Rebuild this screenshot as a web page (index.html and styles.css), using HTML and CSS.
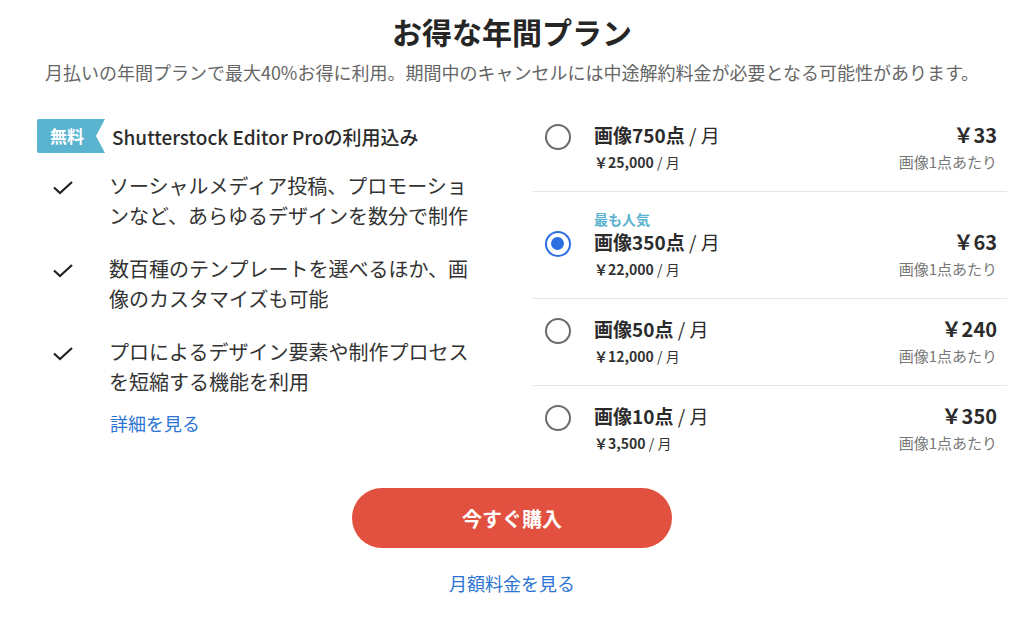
FILE: index.html
```html
<!DOCTYPE html>
<html lang="ja">
<head>
	<meta charset="UTF-8">
	<title>お得な年間プラン</title>
	<link rel="stylesheet" href="styles.css">
</head>
<body>
	<div id="container">
		<h1 class="title">お得な年間プラン</h1>
		<p class="lead">月払いの年間プランで最大40%お得に利用。期間中のキャンセルには中途解約料金が必要となる可能性があります。</p>

		<div class="columns">
			<div class="features">
				<div class="promo">
					<span class="ribbon">無料</span>
					<span class="promo-text">Shutterstock Editor Proの利用込み</span>
				</div>
				<ul class="checks">
					<li>
						<svg class="tick" viewBox="0 0 24 24" width="24" height="24"><path d="M3 12.5 L9 18 L21 7" fill="none" stroke="#222" stroke-width="2.2"/></svg>
						<span>ソーシャルメディア投稿、プロモーションなど、あらゆるデザインを数分で制作</span>
					</li>
					<li>
						<svg class="tick" viewBox="0 0 24 24" width="24" height="24"><path d="M3 12.5 L9 18 L21 7" fill="none" stroke="#222" stroke-width="2.2"/></svg>
						<span>数百種のテンプレートを選べるほか、画像のカスタマイズも可能</span>
					</li>
					<li>
						<svg class="tick" viewBox="0 0 24 24" width="24" height="24"><path d="M3 12.5 L9 18 L21 7" fill="none" stroke="#222" stroke-width="2.2"/></svg>
						<span>プロによるデザイン要素や制作プロセスを短縮する機能を利用</span>
					</li>
				</ul>
				<a class="more" href="#">詳細を見る</a>
			</div>

			<div class="plans">
				<div class="plan">
					<span class="radio"></span>
					<div class="plan-info">
						<div class="plan-name">画像750点 <span class="unit">/ 月</span></div>
						<div class="plan-total">￥25,000 <span class="unit">/ 月</span></div>
					</div>
					<div class="plan-price">
						<div class="price">￥33</div>
						<div class="per">画像1点あたり</div>
					</div>
				</div>
				<div class="plan">
					<span class="radio checked"></span>
					<div class="plan-info">
						<div class="popular">最も人気</div>
						<div class="plan-name">画像350点 <span class="unit">/ 月</span></div>
						<div class="plan-total">￥22,000 <span class="unit">/ 月</span></div>
					</div>
					<div class="plan-price">
						<div class="price">￥63</div>
						<div class="per">画像1点あたり</div>
					</div>
				</div>
				<div class="plan">
					<span class="radio"></span>
					<div class="plan-info">
						<div class="plan-name">画像50点 <span class="unit">/ 月</span></div>
						<div class="plan-total">￥12,000 <span class="unit">/ 月</span></div>
					</div>
					<div class="plan-price">
						<div class="price">￥240</div>
						<div class="per">画像1点あたり</div>
					</div>
				</div>
				<div class="plan last">
					<span class="radio"></span>
					<div class="plan-info">
						<div class="plan-name">画像10点 <span class="unit">/ 月</span></div>
						<div class="plan-total">￥3,500 <span class="unit">/ 月</span></div>
					</div>
					<div class="plan-price">
						<div class="price">￥350</div>
						<div class="per">画像1点あたり</div>
					</div>
				</div>
			</div>
		</div>

		<div class="actions">
			<button class="buy" type="button">今すぐ購入</button>
			<a class="monthly" href="#">月額料金を見る</a>
		</div>
	</div>
</body>
</html>
```

FILE: styles.css
```css
body {
	margin: 0;
	background: #fff;
	color: #2e2e2e;
	font-family: "Noto Sans CJK JP", "Noto Sans", sans-serif;
}
#container {
	width: 1024px;
	padding-top: 13px;
}
.title {
	margin: 0;
	font-size: 30px;
	line-height: 36px;
	font-weight: 700;
	text-align: center;
	color: #262626;
}
.lead {
	margin: 10px 0 0;
	font-size: 18px;
	line-height: 26px;
	text-align: center;
	color: #666;
}

.columns {
	display: flex;
	justify-content: space-between;
	padding: 20px 17px 0 37px;
}

/* left */
.features {
	width: 460px;
	padding-top: 14px;
}
.promo {
	display: flex;
	align-items: center;
	gap: 7px;
}
.ribbon {
	display: inline-block;
	width: 55px;
	height: 34px;
	padding-left: 13px;
	line-height: 34px;
	font-size: 17px;
	font-weight: 700;
	color: #fff;
	background: #5ab3cf;
	border-radius: 2px 0 0 2px;
	clip-path: polygon(0 0, 100% 0, calc(100% - 9px) 50%, 100% 100%, 0 100%);
}
.promo-text {
	font-size: 19px;
	font-weight: 500;
	color: #2b2b2b;
}
.checks {
	list-style: none;
	margin: 18px 0 0;
	padding: 0;
	display: flex;
	flex-direction: column;
	gap: 23px;
}
.checks li {
	display: flex;
	align-items: flex-start;
}
.tick {
	flex: none;
	margin: 4px 34px 0 14px;
}
.checks span {
	width: 370px;
	font-size: 20px;
	line-height: 30px;
	color: #333;
}
.more {
	display: block;
	margin: 14px 0 0 73px;
	font-size: 18px;
	line-height: 24px;
	color: #2b74d4;
	text-decoration: none;
}

/* right */
.plans {
	width: 474px;
}
.plan {
	display: flex;
	align-items: flex-start;
	padding: 17px 10px 18px 12px;
	border-bottom: 1px solid #e6e6e6;
}
.plan.last {
	border-bottom: none;
	padding-bottom: 10px;
}
.radio {
	flex: none;
	box-sizing: border-box;
	width: 26px;
	height: 26px;
	border: 2.5px solid #6b6b6b;
	border-radius: 50%;
	align-self: flex-end;
	margin-bottom: 23px;
	position: relative;
}
.radio.checked {
	border-color: #2c6fe0;
}
.radio.checked::after {
	content: "";
	position: absolute;
	left: 4px;
	top: 4px;
	width: 13px;
	height: 13px;
	border-radius: 50%;
	background: #2c6fe0;
}
.plan-info {
	flex: 1;
	margin-left: 23px;
}
.popular {
	font-size: 14px;
	line-height: 20px;
	font-weight: 700;
	color: #5ab3cf;
}
.plan-name {
	font-size: 19px;
	line-height: 26px;
	font-weight: 700;
	color: #2b2b2b;
}
.plan-total {
	margin-top: 3px;
	font-size: 14px;
	line-height: 22px;
	font-weight: 700;
	color: #333;
}
.unit {
	font-weight: 400;
}
.plan-price {
	text-align: right;
	align-self: flex-end;
}
.price {
	font-size: 20px;
	line-height: 26px;
	font-weight: 700;
	color: #2b2b2b;
}
.per {
	margin-top: 3px;
	font-size: 15px;
	line-height: 22px;
	color: #777;
}

/* bottom */
.actions {
	display: flex;
	flex-direction: column;
	align-items: center;
	margin-top: 24px;
}
.buy {
	width: 320px;
	height: 60px;
	border: none;
	border-radius: 30px;
	background: #e2503f;
	color: #fff;
	font-family: inherit;
	font-size: 20px;
	font-weight: 700;
	cursor: pointer;
}
.monthly {
	margin-top: 23px;
	font-size: 18px;
	line-height: 24px;
	color: #2b74d4;
	text-decoration: none;
}
```
